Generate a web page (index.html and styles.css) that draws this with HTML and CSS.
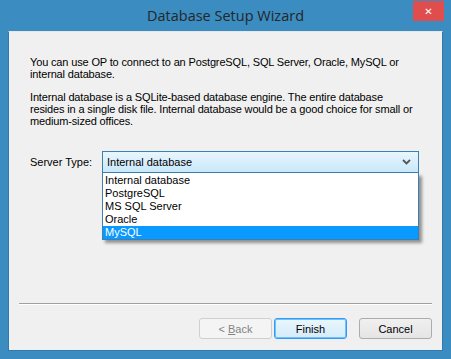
FILE: index.html
```html
<!DOCTYPE html>
<html lang="en">
<head>
  <meta charset="UTF-8">
  <meta name="viewport" content="width=device-width, initial-scale=1.0">
  <title>Database Setup Wizard</title>
  <link rel="stylesheet" href="styles.css">
</head>
<body>
  <div class="window">
    <div class="titlebar">
      <span></span>
      <h1 class="title">Database Setup Wizard</h1>
      <button class="close-btn">&#x2715;</button>
    </div>
    <div class="client">
      <div class="content">
        <p>You can use OP to connect to an PostgreSQL, SQL Server, Oracle, MySQL or internal database.</p>
        <p>Internal database is a SQLite-based database engine. The entire database resides in a single disk file. Internal database would be a good choice for small or medium-sized offices.</p>
        <div class="field">
          <label>Server Type:</label>
          <div class="combo">
            <div class="combo-box">
              <span>Internal database</span>
              <svg class="arrow" width="9" height="6" viewBox="0 0 9 6"><path d="M1 1 L4.5 4.5 L8 1" fill="none" stroke="#555" stroke-width="1.8"/></svg>
            </div>
            <ul class="dropdown">
              <li>Internal database</li>
              <li>PostgreSQL</li>
              <li>MS SQL Server</li>
              <li>Oracle</li>
              <li class="selected">MySQL</li>
            </ul>
          </div>
        </div>
      </div>
      <div class="footer">
        <div class="separator"></div>
        <div class="buttons">
          <button class="btn disabled">&lt; <u>B</u>ack</button>
          <button class="btn default">Finish</button>
          <button class="btn cancel">Cancel</button>
        </div>
      </div>
    </div>
  </div>
</body>
</html>
```

FILE: styles.css
```css
* {
  margin: 0;
  padding: 0;
  box-sizing: border-box;
}

:root {
  --frame: #3a8cc1;
  --client-bg: #f0f0f0;
  --text: #000;
  --highlight: #0a99ff;
}

body {
  width: 451px;
  height: 359px;
  overflow: hidden;
  font-family: 'Liberation Sans', Arial, sans-serif;
  font-size: 11px;
  color: var(--text);
}

.window {
  width: 451px;
  height: 359px;
  background-color: var(--frame);
  display: flex;
  flex-direction: column;
  padding: 0 8px 8px;
}

.titlebar {
  height: 31px;
  display: grid;
  grid-template-columns: 1fr auto 1fr;
  margin: 0 -8px;
}

.title {
  font-family: 'Open Sans', 'Noto Sans', sans-serif;
  font-weight: normal;
  font-size: 14.5px;
  color: #262626;
  line-height: 31px;
}

.close-btn {
  justify-self: end;
  align-self: start;
  margin: 1px 7px 0 0;
  width: 31px;
  height: 20px;
  border: none;
  background-color: #e04d4d;
  color: #fff;
  font-size: 10px;
  font-weight: bold;
  font-family: 'DejaVu Sans', sans-serif;
}

.client {
  flex: 1;
  background-color: var(--client-bg);
  display: flex;
  flex-direction: column;
  border: 1px solid #2f7bb0;
  border-top-color: #e8e8e8;
}

.content {
  flex: 1;
  padding: 24px 21px 0;
}

.content p {
  line-height: 12px;
  margin-bottom: 11px;
  width: 390px;
  letter-spacing: -0.15px;
}

.field {
  display: flex;
  align-items: center;
  margin-top: 24px;
}

.field label {
  width: 72px;
}

.combo {
  position: relative;
  width: 317px;
}

.combo-box {
  height: 22px;
  border: 1px solid #3c7fb1;
  background: linear-gradient(#eaf6fd, #c8e8fb);
  display: flex;
  align-items: center;
  justify-content: space-between;
  padding: 0 7px 0 4px;
}

.dropdown {
  position: absolute;
  top: 22px;
  left: 0;
  width: 317px;
  list-style: none;
  background-color: #fff;
  border: 1px solid #3c7fb1;
  border-top: none;
  padding-top: 1px;
  box-shadow: 3px 3px 3px rgba(0, 0, 0, 0.4);
}

.dropdown li {
  height: 13px;
  line-height: 13px;
  padding-left: 2px;
}

.dropdown li.selected {
  background-color: var(--highlight);
  color: #fff;
}

.footer {
  padding: 0 10px 11px;
}

.separator {
  height: 2px;
  border-top: 1px solid #a0a0a0;
  border-bottom: 1px solid #fff;
  margin-bottom: 13px;
}

.buttons {
  display: flex;
  justify-content: flex-end;
}

.btn {
  width: 73px;
  height: 21px;
  font-family: 'Liberation Sans', Arial, sans-serif;
  font-size: 11px;
  border: 1px solid #acacac;
  border-radius: 3px;
  background: linear-gradient(#f0f0f0, #e5e5e5);
  color: #000;
}

.btn.disabled {
  color: #838383;
  border-color: #cfcfcf;
  background: #f4f4f4;
  margin-right: 2px;
}

.btn.default {
  border-color: #3399ff;
  box-shadow: inset 0 0 0 1px #6fc3f5;
  background: linear-gradient(#eaf6fd, #d4ebf8);
  margin-right: 12px;
}
```
